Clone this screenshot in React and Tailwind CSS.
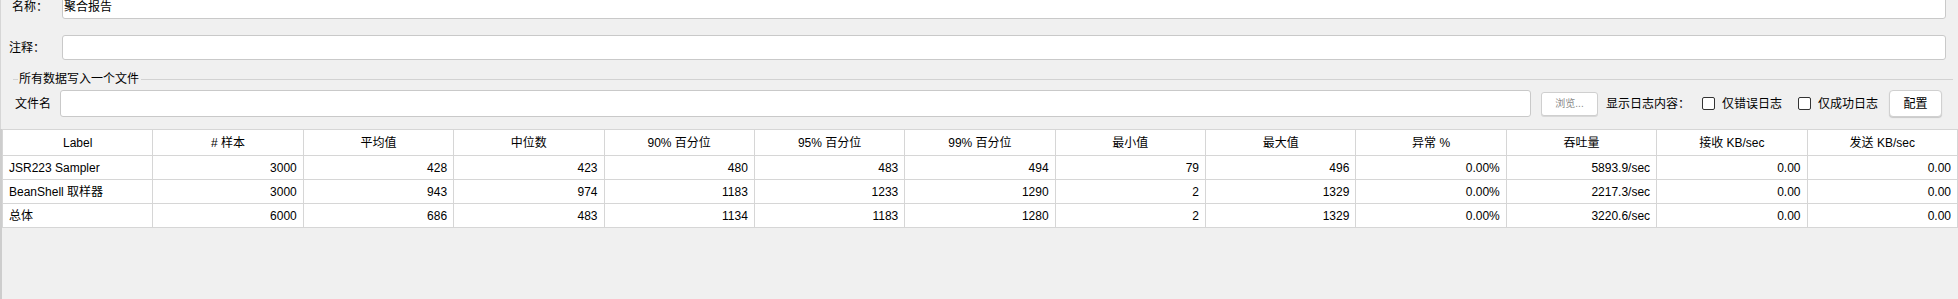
import React from 'react';

const columns = ['Label', '# 样本', '平均值', '中位数', '90% 百分位', '95% 百分位', '99% 百分位', '最小值', '最大值', '异常 %', '吞吐量', '接收 KB/sec', '发送 KB/sec'];

const rows = [
    ['JSR223 Sampler', '3000', '428', '423', '480', '483', '494', '79', '496', '0.00%', '5893.9/sec', '0.00', '0.00'],
    ['BeanShell 取样器', '3000', '943', '974', '1183', '1233', '1290', '2', '1329', '0.00%', '2217.3/sec', '0.00', '0.00'],
    ['总体', '6000', '686', '483', '1134', '1183', '1280', '2', '1329', '0.00%', '3220.6/sec', '0.00', '0.00'],
];

const Field = ({ label, value, labelClass, className = '' }) => (
    <div className={`flex items-center pr-[12px] ${className}`}>
        <span className={`w-[61px] whitespace-nowrap ${labelClass}`}>{label}</span>
        <div className="flex-1 h-[25px] bg-white border border-[#c9c9c9] rounded-[3px] flex items-center px-[1px]">
            {value}
        </div>
    </div>
);

const Checkbox = () => (
    <span className="w-[13px] h-[13px] bg-white border border-[#333333] rounded-[2px] shrink-0" />
);

const App = () => {
    return (
        <div className="h-[299px] overflow-hidden bg-[#f0f0f0] text-[12px] leading-[14px] text-black font-['Liberation_Sans','Noto_Sans_CJK_SC',sans-serif]">
            <div className="border-l border-[#d6d6d6] pb-[12px]">
                <Field label="名称：" value="聚合报告" labelClass="pl-[11px]" className="-mt-[6px]" />
                <Field label="注释：" value="" labelClass="pl-[8px]" className="mt-[16px]" />

                <div className="mt-[12px] flex items-center h-[14px] pl-[12px] pr-[5px]">
                    <div className="w-[5px] h-px bg-[#d2d2d2]" />
                    <span className="px-[1px] whitespace-nowrap">所有数据写入一个文件</span>
                    <div className="flex-1 h-px bg-[#d2d2d2] ml-[1px]" />
                </div>

                <div className="mt-[4px] flex items-center h-[27px] pl-[14px] pr-[16px]">
                    <span className="w-[45px] whitespace-nowrap">文件名</span>
                    <div className="flex-1 h-[27px] bg-white border border-[#c9c9c9] rounded-[3px]" />
                    <button className="ml-[10px] w-[57px] h-[24px] bg-white border border-[#cfcfcf] rounded-[3px] text-[10px] text-[#8a8a8a] shadow-[0_1px_0_#d8d8d8]">
                        浏览...
                    </button>
                    <span className="ml-[8px] w-[96px] whitespace-nowrap">显示日志内容：</span>
                    <Checkbox />
                    <span className="ml-[7px] w-[76px] whitespace-nowrap">仅错误日志</span>
                    <Checkbox />
                    <span className="ml-[7px] w-[71px] whitespace-nowrap">仅成功日志</span>
                    <button className="w-[53px] h-[27px] bg-white border border-[#d0d0d0] rounded-[4px] shadow-[0_1px_1px_#c8c8c8]">
                        配置
                    </button>
                </div>
            </div>

            <div className="h-full border-l-2 border-[#cdcdcd]">
                <table className="w-full table-fixed border-collapse bg-white">
                    <thead>
                        <tr className="h-[26px]">
                            {columns.map((col) => (
                                <th key={col} className="border border-[#d6d6d6] font-normal text-center whitespace-nowrap">
                                    {col}
                                </th>
                            ))}
                        </tr>
                    </thead>
                    <tbody>
                        {rows.map((row) => (
                            <tr key={row[0]} className="h-[24px]">
                                {row.map((cell, i) => (
                                    <td
                                        key={i}
                                        className={`border border-[#d6d6d6] whitespace-nowrap ${i === 0 ? 'text-left pl-[6px]' : 'text-right pr-[6px]'}`}
                                    >
                                        {cell}
                                    </td>
                                ))}
                            </tr>
                        ))}
                    </tbody>
                </table>
            </div>
        </div>
    );
};

export default App;
